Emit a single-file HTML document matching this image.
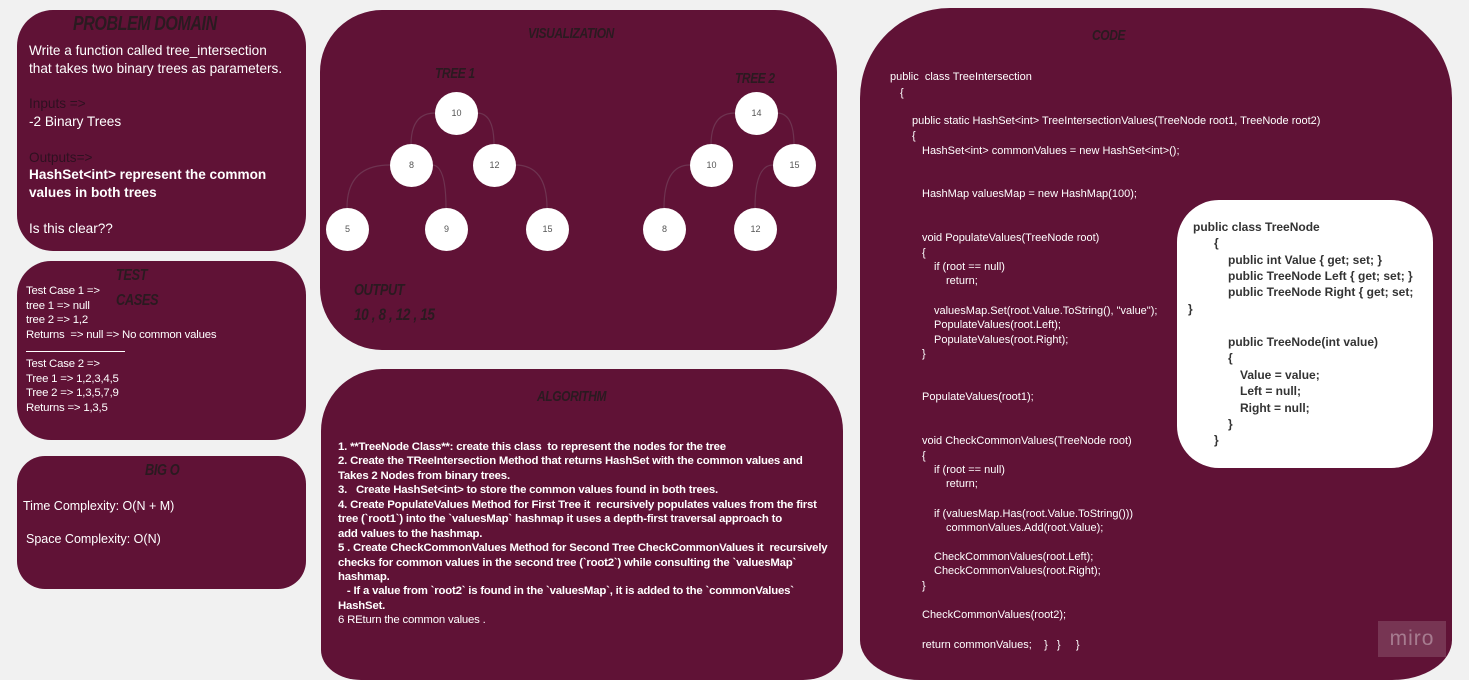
<!DOCTYPE html>
<html style="height:680px;overflow:hidden"><head><meta charset="utf-8"><style>
html,body{margin:0;width:1469px;height:680px;overflow:hidden;background:#f1f1f1;font-family:"Liberation Sans",sans-serif;}
#w{position:absolute;left:0;top:0;width:1469px;height:680px;overflow:hidden;}
.b{position:absolute;background:#601236;}
.t{position:absolute;white-space:pre;color:#fff;}
.h{position:absolute;white-space:pre;color:#2a1a20;font-weight:bold;font-style:italic;font-family:"Liberation Sans Narrow","Liberation Sans",sans-serif;transform-origin:left top;transform:scaleX(.8);letter-spacing:-0.5px}
.c{position:absolute;width:43px;height:43px;border-radius:50%;background:#fff;color:#555;font-size:9px;text-align:center;line-height:43px;}
.pd{font-size:13.6px}
.tc{font-size:11.4px;letter-spacing:-0.2px}
.cd{font-size:11px;letter-spacing:0px}
.al{font-size:11.4px;font-weight:bold;letter-spacing:-0.2px}
.wn{position:absolute;white-space:pre;color:#333;font-size:12px;font-weight:bold}
</style></head><body><div id="w">
<div class="b" style="left:17px;top:10px;width:289px;height:241px;border-radius:36px"></div>
<div class="b" style="left:17px;top:261px;width:289px;height:179px;border-radius:34px"></div>
<div class="b" style="left:17px;top:456px;width:289px;height:133px;border-radius:28px"></div>
<div class="b" style="left:320px;top:10px;width:517px;height:340px;border-radius:62px"></div>
<div class="b" style="left:321px;top:369px;width:522px;height:311px;border-radius:62px 62px 40px 40px / 62px 62px 30px 30px"></div>
<div class="b" style="left:860px;top:8px;width:592px;height:672px;border-radius:90px 90px 60px 60px / 90px 90px 40px 40px"></div>
<div style="position:absolute;left:1177px;top:200px;width:256px;height:268px;border-radius:42px;background:#fff"></div>
<div style="position:absolute;left:1378px;top:621px;width:68px;height:36px;background:rgba(255,255,255,.15);color:rgba(255,255,255,.35);font-size:21px;line-height:36px;text-align:center;letter-spacing:1px">miro</div>

<div class="h" style="left:73px;top:13px;font-size:20px">PROBLEM DOMAIN</div>
<div class="t pd" style="left:29px;top:43px">Write a function called tree_intersection</div>
<div class="t pd" style="left:29px;top:61px">that takes two binary trees as parameters.</div>
<div class="t pd" style="left:29px;top:96px;color:#2e1020">Inputs =&gt;</div>
<div class="t pd" style="left:29px;top:114px">-2 Binary Trees</div>
<div class="t pd" style="left:29px;top:150px;color:#2e1020">Outputs=&gt;</div>
<div class="t pd" style="left:29px;top:167px;font-weight:bold">HashSet&lt;int&gt; represent the common</div>
<div class="t pd" style="left:29px;top:185px;font-weight:bold">values in both trees</div>
<div class="t pd" style="left:29px;top:221px">Is this clear??</div>

<div class="h" style="left:116px;top:267px;font-size:16px">TEST</div>
<div class="h" style="left:116px;top:292px;font-size:16px">CASES</div>
<div class="t tc" style="left:26px;top:285px">Test Case 1 =&gt;</div>
<div class="t tc" style="left:26px;top:300px">tree 1 =&gt; null</div>
<div class="t tc" style="left:26px;top:314px">tree 2 =&gt; 1,2</div>
<div class="t tc" style="left:26px;top:329px">Returns  =&gt; null =&gt; No common values</div>
<div style="position:absolute;left:26px;top:351px;width:99px;border-top:1px solid #fff"></div>
<div class="t tc" style="left:26px;top:358px">Test Case 2 =&gt;</div>
<div class="t tc" style="left:26px;top:373px">Tree 1 =&gt; 1,2,3,4,5</div>
<div class="t tc" style="left:26px;top:387px">Tree 2 =&gt; 1,3,5,7,9</div>
<div class="t tc" style="left:26px;top:402px">Returns =&gt; 1,3,5</div>

<div class="h" style="left:145px;top:462px;font-size:16px">BIG O</div>
<div class="t" style="left:23px;top:499px;font-size:12.5px">Time Complexity: O(N + M)</div>
<div class="t" style="left:26px;top:532px;font-size:12.5px">Space Complexity: O(N)</div>

<div class="h" style="left:528px;top:25px;font-size:15px">VISUALIZATION</div>
<div class="h" style="left:435px;top:65px;font-size:15px">TREE 1</div>
<div class="h" style="left:735px;top:70px;font-size:15px">TREE 2</div>
<div class="h" style="left:354px;top:282px;font-size:16px">OUTPUT</div>
<div class="h" style="left:354px;top:305px;font-size:17px">10 , 8 , 12 , 15</div>
<svg style="position:absolute;left:0;top:0" width="1469" height="680"><g stroke="#6e3350" stroke-width="1.2" fill="none">
<path d="M435 113 Q411 113 411 145"/><path d="M477 113 Q494 113 494 145"/>
<path d="M390 165 Q347 165 347 208"/><path d="M432 165 Q446 165 446 208"/><path d="M515 165 Q547 165 547 208"/>
<path d="M735 113 Q711 113 711 145"/><path d="M777 113 Q794 113 794 145"/>
<path d="M690 165 Q664 165 664 208"/><path d="M773 165 Q755 165 755 208"/></g></svg>
<div class="c" style="left:435px;top:92px">10</div>
<div class="c" style="left:390px;top:144px">8</div>
<div class="c" style="left:473px;top:144px">12</div>
<div class="c" style="left:326px;top:208px">5</div>
<div class="c" style="left:425px;top:208px">9</div>
<div class="c" style="left:526px;top:208px">15</div>
<div class="c" style="left:735px;top:92px">14</div>
<div class="c" style="left:690px;top:144px">10</div>
<div class="c" style="left:773px;top:144px">15</div>
<div class="c" style="left:643px;top:208px">8</div>
<div class="c" style="left:734px;top:208px">12</div>

<div class="h" style="left:537px;top:388px;font-size:15px">ALGORITHM</div>
<div class="t al" style="left:338px;top:441px">1. **TreeNode Class**: create this class  to represent the nodes for the tree</div>
<div class="t al" style="left:338px;top:455px">2. Create the TReeIntersection Method that returns HashSet with the common values and</div>
<div class="t al" style="left:338px;top:470px">Takes 2 Nodes from binary trees.</div>
<div class="t al" style="left:338px;top:484px">3.   Create HashSet&lt;int&gt; to store the common values found in both trees.</div>
<div class="t al" style="left:338px;top:499px">4. Create PopulateValues Method for First Tree it  recursively populates values from the first</div>
<div class="t al" style="left:338px;top:513px">tree (`root1`) into the `valuesMap` hashmap it uses a depth-first traversal approach to</div>
<div class="t al" style="left:338px;top:528px">add values to the hashmap.</div>
<div class="t al" style="left:338px;top:542px">5 . Create CheckCommonValues Method for Second Tree CheckCommonValues it  recursively</div>
<div class="t al" style="left:338px;top:557px">checks for common values in the second tree (`root2`) while consulting the `valuesMap`</div>
<div class="t al" style="left:338px;top:571px">hashmap.</div>
<div class="t al" style="left:338px;top:585px">   - If a value from `root2` is found in the `valuesMap`, it is added to the `commonValues`</div>
<div class="t al" style="left:338px;top:600px">HashSet.</div>
<div class="t al" style="left:338px;top:614px;font-weight:normal">6 REturn the common values .</div>

<div class="h" style="left:1092px;top:27px;font-size:15px">CODE</div>
<div class="t cd" style="left:890px;top:71px">public  class TreeIntersection</div>
<div class="t cd" style="left:900px;top:87px">{</div>
<div class="t cd" style="left:912px;top:115px">public static HashSet&lt;int&gt; TreeIntersectionValues(TreeNode root1, TreeNode root2)</div>
<div class="t cd" style="left:912px;top:130px">{</div>
<div class="t cd" style="left:922px;top:145px">HashSet&lt;int&gt; commonValues = new HashSet&lt;int&gt;();</div>
<div class="t cd" style="left:922px;top:188px">HashMap valuesMap = new HashMap(100);</div>
<div class="t cd" style="left:922px;top:232px">void PopulateValues(TreeNode root)</div>
<div class="t cd" style="left:922px;top:247px">{</div>
<div class="t cd" style="left:934px;top:261px">if (root == null)</div>
<div class="t cd" style="left:946px;top:275px">return;</div>
<div class="t cd" style="left:934px;top:305px">valuesMap.Set(root.Value.ToString(), "value");</div>
<div class="t cd" style="left:934px;top:319px">PopulateValues(root.Left);</div>
<div class="t cd" style="left:934px;top:334px">PopulateValues(root.Right);</div>
<div class="t cd" style="left:922px;top:348px">}</div>
<div class="t cd" style="left:922px;top:391px">PopulateValues(root1);</div>
<div class="t cd" style="left:922px;top:435px">void CheckCommonValues(TreeNode root)</div>
<div class="t cd" style="left:922px;top:450px">{</div>
<div class="t cd" style="left:934px;top:464px">if (root == null)</div>
<div class="t cd" style="left:946px;top:478px">return;</div>
<div class="t cd" style="left:934px;top:508px">if (valuesMap.Has(root.Value.ToString()))</div>
<div class="t cd" style="left:946px;top:522px">commonValues.Add(root.Value);</div>
<div class="t cd" style="left:934px;top:551px">CheckCommonValues(root.Left);</div>
<div class="t cd" style="left:934px;top:565px">CheckCommonValues(root.Right);</div>
<div class="t cd" style="left:922px;top:580px">}</div>
<div class="t cd" style="left:922px;top:609px">CheckCommonValues(root2);</div>
<div class="t cd" style="left:922px;top:639px">return commonValues;    }   }     }</div>

<div class="wn" style="left:1193px;top:220px">public class TreeNode</div>
<div class="wn" style="left:1214px;top:236px">{</div>
<div class="wn" style="left:1228px;top:253px">public int Value { get; set; }</div>
<div class="wn" style="left:1228px;top:269px">public TreeNode Left { get; set; }</div>
<div class="wn" style="left:1228px;top:285px">public TreeNode Right { get; set;</div>
<div class="wn" style="left:1188px;top:302px">}</div>
<div class="wn" style="left:1228px;top:335px">public TreeNode(int value)</div>
<div class="wn" style="left:1228px;top:351px">{</div>
<div class="wn" style="left:1240px;top:368px">Value = value;</div>
<div class="wn" style="left:1240px;top:384px">Left = null;</div>
<div class="wn" style="left:1240px;top:401px">Right = null;</div>
<div class="wn" style="left:1228px;top:417px">}</div>
<div class="wn" style="left:1214px;top:433px">}</div>
</div></body></html>
